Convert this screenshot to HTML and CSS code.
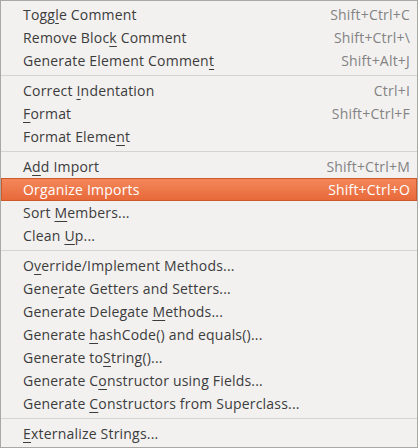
FILE: index.html
```html
<!DOCTYPE html>
<html>
<head>
<meta charset="utf-8">
<link rel="stylesheet" href="styles.css">
</head>
<body>
<div class="menu">
  <div class="item"><span class="label">Togg<u>l</u>e Comment</span><span class="key">Shift+Ctrl+C</span></div>
  <div class="item"><span class="label">Remove Bloc<u>k</u> Comment</span><span class="key">Shift+Ctrl+\</span></div>
  <div class="item"><span class="label">Generate Element Commen<u>t</u></span><span class="key">Shift+Alt+J</span></div>
  <div class="sep"></div>
  <div class="item"><span class="label">Correct <u>I</u>ndentation</span><span class="key">Ctrl+I</span></div>
  <div class="item"><span class="label"><u>F</u>ormat</span><span class="key">Shift+Ctrl+F</span></div>
  <div class="item"><span class="label">Format Eleme<u>n</u>t</span></div>
  <div class="sep"></div>
  <div class="item"><span class="label">A<u>d</u>d Import</span><span class="key">Shift+Ctrl+M</span></div>
  <div class="item active"><span class="label">Organize Imports</span><span class="key">Shift+Ctrl+O</span></div>
  <div class="item"><span class="label">Sort <u>M</u>embers...</span></div>
  <div class="item"><span class="label">Clean <u>U</u>p...</span></div>
  <div class="sep"></div>
  <div class="item"><span class="label">O<u>v</u>erride/Implement Methods...</span></div>
  <div class="item"><span class="label">Gene<u>r</u>ate Getters and Setters...</span></div>
  <div class="item"><span class="label">Generate Delegate <u>M</u>ethods...</span></div>
  <div class="item"><span class="label">Generate <u>h</u>ashCode() and equals()...</span></div>
  <div class="item"><span class="label">Generate to<u>S</u>tring()...</span></div>
  <div class="item"><span class="label">Generate C<u>o</u>nstructor using Fields...</span></div>
  <div class="item"><span class="label">Generate <u>C</u>onstructors from Superclass...</span></div>
  <div class="sep"></div>
  <div class="item"><span class="label"><u>E</u>xternalize Strings...</span></div>
</div>
</body>
</html>
```
FILE: styles.css
```css
html, body {
  margin: 0;
  padding: 0;
  background: #f2f1f0;
}
.menu {
  width: 418px;
  height: 448px;
  box-sizing: border-box;
  border: 1px solid #aaa8a5;
  background: #f2f1f0;
  padding: 2px 0;
  font-family: "Open Sans", "DejaVu Sans", sans-serif;
  font-size: 14px;
  letter-spacing: 0.2px;
  color: #3c3c3c;
}
.item {
  height: 23px;
  box-sizing: border-box;
  display: flex;
  align-items: center;
  justify-content: space-between;
  padding: 0 7px 0 22px;
  white-space: nowrap;
  line-height: 1;
}
.label u {
  text-decoration: underline;
  text-decoration-thickness: 1px;
  text-underline-offset: 3px;
}
.key {
  color: #838383;
}
.item.active {
  background: linear-gradient(#f3875a, #e8693a);
  border: 1px solid #cc5a2b;
  padding: 0 6px 0 21px;
  color: #ffffff;
}
.item.active .key {
  color: #ffffff;
}
.sep {
  height: 7px;
  display: flex;
  align-items: center;
}
.sep::before {
  content: "";
  display: block;
  width: 100%;
  height: 1px;
  background: #d6d4d1;
}
```
